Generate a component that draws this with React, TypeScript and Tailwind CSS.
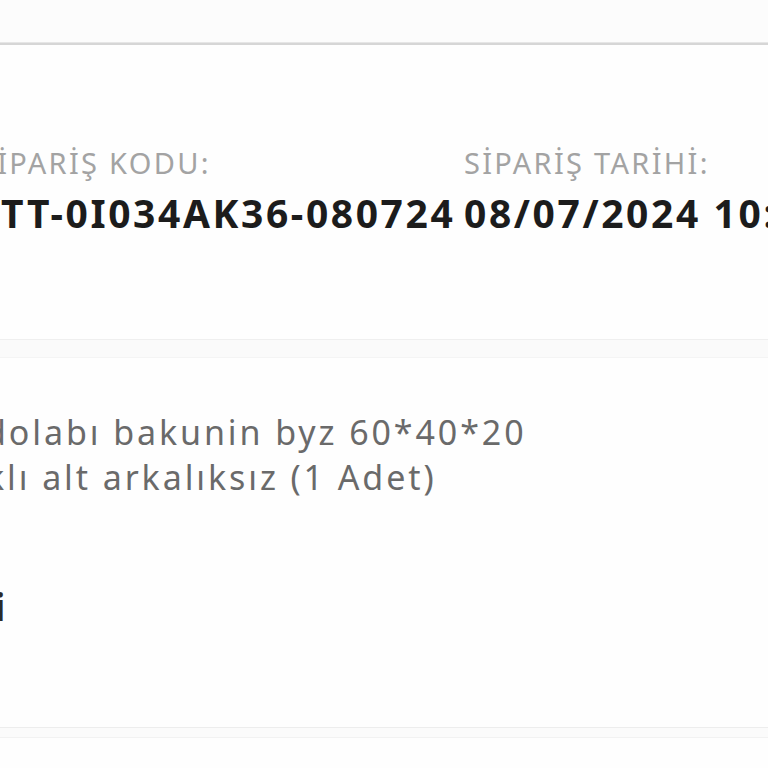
const orderInfo = [
  { label: "SİPARİŞ KODU:", value: "TT-0I034AK36-080724", width: "w-[485px]", offset: "-ml-[21px]", valueOffset: "ml-[22px]" },
  { label: "SİPARİŞ TARİHİ:", value: "08/07/2024 10:32", width: "w-[400px]", offset: "", valueOffset: "" },
];

export default function App() {
  return (
    <div className="h-[768px] w-[768px] overflow-hidden bg-[#fefefe] font-['Noto_Sans',sans-serif]">
      {/* top bar edge */}
      <div className="h-[42px] bg-[#fcfcfc]" />
      <div className="h-[1px] bg-[#e6e6e6]" />
      <div className="h-[2px] bg-[#d6d6d6]" />

      {/* order header */}
      <div className="flex pt-[100px]">
        {orderInfo.map((item, i) => (
          <div key={i} className={`shrink-0 ${item.width} ${i === 0 ? item.offset : ""}`}>
            <div className="whitespace-nowrap text-[29px] leading-[36px] tracking-[2.3px] text-[#a3a3a3]">
              {item.label}
            </div>
            <div
              className={`mt-[10px] whitespace-nowrap text-[39px] font-bold leading-[44px] tracking-[2.6px] text-[#1c1c1c] ${item.valueOffset}`}
            >
              {item.value}
            </div>
          </div>
        ))}
      </div>

      {/* divider */}
      <div className="mt-[104px] border-t border-[#efefef]" />
      <div className="h-[17px] bg-[#fafafa]" />
      <div className="border-t border-[#f4f4f4]" />

      {/* item */}
      <div className="-ml-[15px] mt-[52px] text-[34px] leading-[45px] tracking-[2.9px] text-[#6a6a6a]">
        <div className="whitespace-nowrap">dolabı bakunin byz 60*40*20</div>
        <div className="ml-[1px] whitespace-nowrap">klı alt arkalıksız (1 Adet)</div>
      </div>

      {/* next section title (cut off) */}
      <div className="-ml-[6px] mt-[84px] text-[38px] font-bold leading-[44px] text-[#2a2a2a]">
        i
      </div>

      {/* bottom divider */}
      <div className="mt-[99px] border-t border-[#ededed]" />
      <div className="h-[9px] bg-[#fbfbfb]" />
      <div className="border-t border-[#f2f2f2]" />
    </div>
  );
}
